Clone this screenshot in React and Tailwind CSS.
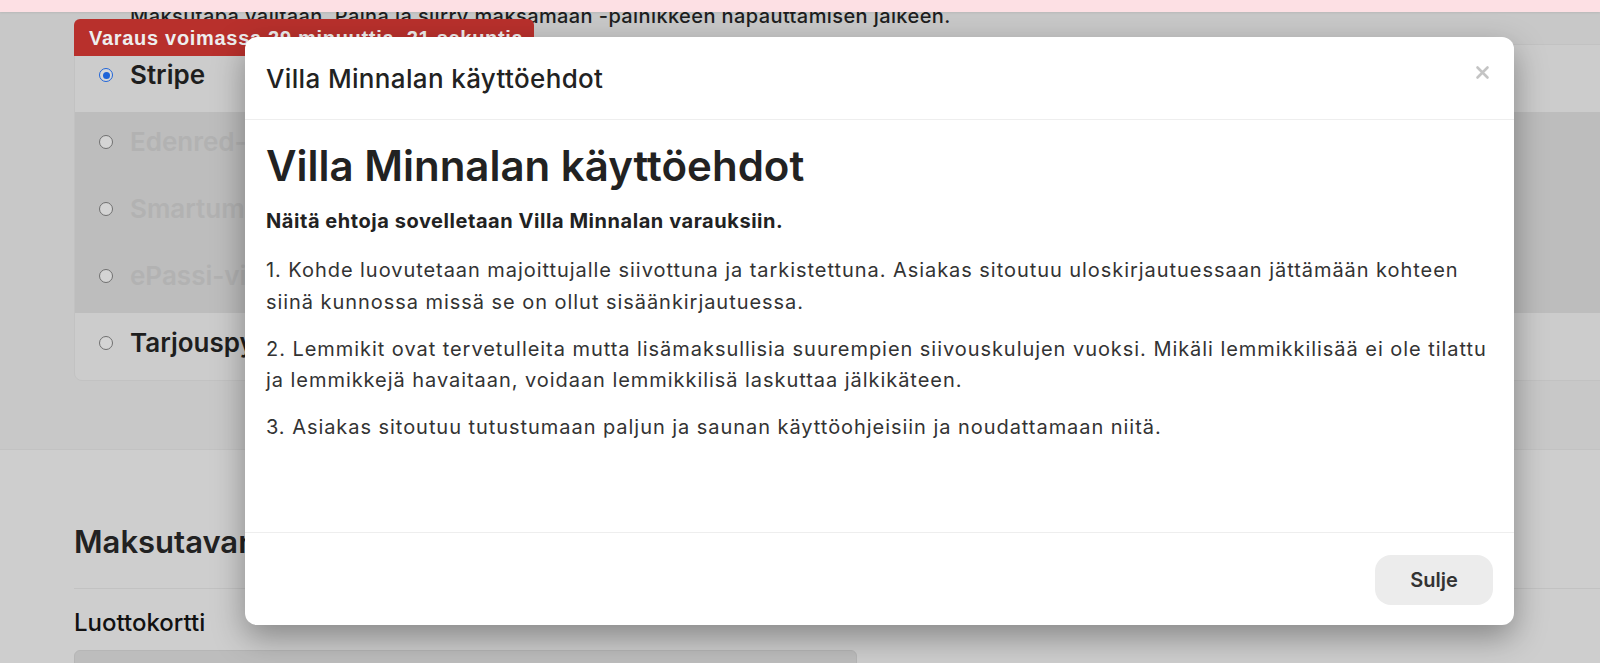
import React from 'react';

const methods = [
  { label: 'Stripe', checked: true, disabled: false },
  { label: 'Edenred-virike', disabled: true },
  { label: 'Smartum-virike', disabled: true },
  { label: 'ePassi-virike', disabled: true },
  { label: 'Tarjouspyyntö', disabled: false },
];

const terms = [
  '1. Kohde luovutetaan majoittujalle siivottuna ja tarkistettuna. Asiakas sitoutuu uloskirjautuessaan jättämään kohteen siinä kunnossa missä se on ollut sisäänkirjautuessa.',
  '2. Lemmikit ovat tervetulleita mutta lisämaksullisia suurempien siivouskulujen vuoksi. Mikäli lemmikkilisää ei ole tilattu ja lemmikkejä havaitaan, voidaan lemmikkilisä laskuttaa jälkikäteen.',
  '3. Asiakas sitoutuu tutustumaan paljun ja saunan käyttöohjeisiin ja noudattamaan niitä.',
];

const Radio = ({ checked }) =>
  checked ? (
    <span className="flex items-center justify-center w-[14px] h-[14px] shrink-0 rounded-full border-[1.5px] border-[#1f64d8] bg-[#d8d8d8]">
      <span className="w-[7px] h-[7px] rounded-full bg-[#1f64d8]"></span>
    </span>
  ) : (
    <span className="w-[14px] h-[14px] shrink-0 rounded-full border-[1.5px] border-[#707070] bg-[#d4d4d4]"></span>
  );

const App = () => {
  return (
    <div className="relative h-[663px] overflow-hidden bg-[#cecece] font-['Inter',sans-serif] text-[#1e1e1e]">
      {/* Page behind the dialog (dimmed) */}
      <section className="h-[450px] bg-[#c8c8c8] pl-[74px] pt-[3px] border-b border-[#c2c2c2]">
        <p className="pl-[56px] text-[20px] font-medium leading-[26px] tracking-[0.4px] whitespace-nowrap">
          Maksutapa valitaan. Paina ja siirry maksamaan -painikkeen napauttamisen jälkeen.
        </p>
        <div className="mt-[15px] w-[1560px] rounded-lg border border-[#c2c2c2] overflow-hidden">
          {methods.map((m, i) => (
            <div
              key={i}
              className={`flex items-center gap-[17px] h-[67px] pl-[24px] pb-[7px] ${
                m.disabled ? 'bg-[#bdbdbd] text-[#b2b2b2]' : 'bg-[#cccccc] text-[#1e1e1e]'
              }`}
            >
              <Radio checked={m.checked} />
              <span className="text-[26px] font-semibold leading-[32px]">{m.label}</span>
            </div>
          ))}
        </div>
      </section>

      <section className="pl-[74px] pt-[72px]">
        <h2 className="text-[31px] font-semibold leading-[40px] text-[#222]">Maksutavan valinta</h2>
        <div className="mt-[26px] w-[1560px] border-t border-[#c2c2c2]"></div>
        <h3 className="mt-[19px] text-[24px] font-medium leading-[30px] text-[#111]">Luottokortti</h3>
        <div className="mt-[12px] w-[783px] h-[40px] rounded-md border border-[#b6b6b6] bg-[#bdbdbd]"></div>
      </section>

      {/* Reservation timer */}
      <div className="absolute top-[19px] left-[74px] h-[37px] w-[460px] rounded-t-md bg-[#b8302c] pl-[15px] flex items-center font-['Liberation_Sans',sans-serif] text-[20px] font-bold text-[#eeeeee] tracking-[0.7px] whitespace-nowrap">
        Varaus voimassa 29 minuuttia, 21 sekuntia
      </div>

      {/* Notification strip */}
      <div className="absolute top-0 inset-x-0 h-[12px] bg-[#fde0e4] shadow-[0_1px_2px_rgba(0,0,0,0.08)]"></div>

      {/* Terms dialog */}
      <div className="absolute left-[245px] top-[37px] w-[1269px] h-[588px] flex flex-col rounded-[12px] bg-white shadow-[0_12px_32px_rgba(0,0,0,0.35)]">
        <div className="flex items-center justify-between h-[83px] shrink-0 pl-[21px] pr-[24px] border-b border-[#eeeeee]">
          <h2 className="text-[26px] font-medium text-[#222] tracking-[0.35px]">Villa Minnalan käyttöehdot</h2>
          <svg width="15" height="15" viewBox="0 0 15 15" className="mb-[12px]">
            <path d="M2.5 2.5 L12.5 12.5 M12.5 2.5 L2.5 12.5" stroke="#c4c4c4" strokeWidth="2.6" strokeLinecap="round" />
          </svg>
        </div>

        <div className="flex-1 pl-[21px] pr-[12px] pt-[21px] text-[#333]">
          <h1 className="text-[42px] font-semibold leading-[50px] text-[#222]">Villa Minnalan käyttöehdot</h1>
          <p className="mt-[17px] mb-[21px] text-[20px] font-bold leading-[26px] tracking-[0.55px] text-[#222]">
            Näitä ehtoja sovelletaan Villa Minnalan varauksiin.
          </p>
          {terms.map((t, i) => (
            <p key={i} className="mb-[15.5px] text-[20px] leading-[31.6px] tracking-[0.95px]">{t}</p>
          ))}
        </div>

        <div className="flex justify-end shrink-0 h-[93px] pt-[22px] pr-[21px] border-t border-[#eeeeee]">
          <button className="w-[118px] h-[50px] rounded-[16px] bg-[#ececec] text-[20px] font-semibold text-[#333]">
            Sulje
          </button>
        </div>
      </div>
    </div>
  );
};

export default App;
